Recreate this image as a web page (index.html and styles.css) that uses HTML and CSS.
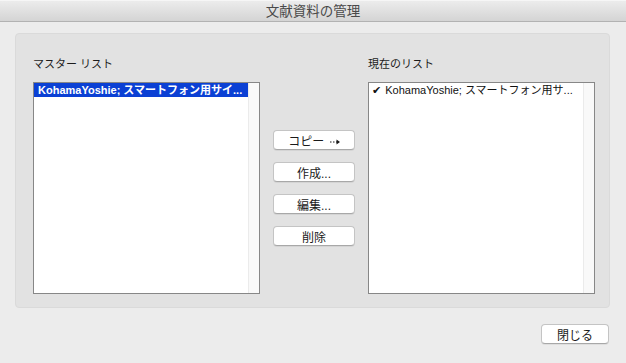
FILE: index.html
```html
<!DOCTYPE html>
<html lang="ja">

<head>
    <meta charset="UTF-8">
    <title>文献資料の管理</title>
    <link rel="stylesheet" href="styles.css">
</head>

<body>

    <div class="window">
        <!-- Title bar -->
        <div class="titlebar">文献資料の管理</div>

        <div class="content">
            <!-- Lists group -->
            <div class="group">
                <p class="label">マスター リスト</p>
                <div class="spacer"></div>
                <p class="label">現在のリスト</p>

                <div class="listbox">
                    <div class="rows">
                        <div class="row selected">KohamaYoshie; スマートフォン用サイ...</div>
                    </div>
                    <div class="scroll"></div>
                </div>

                <div class="actions">
                    <button class="btn">コピー
                        <svg class="arrow" width="10" height="6" viewBox="0 0 10 6">
                            <path d="M0 3h1.5M3 3h1.5M6 3h1" stroke="#1a1a1a" stroke-width="1.2" />
                            <path d="M6.5 0.5L10 3L6.5 5.5z" fill="#1a1a1a" />
                        </svg>
                    </button>
                    <button class="btn">作成...</button>
                    <button class="btn">編集...</button>
                    <button class="btn">削除</button>
                </div>

                <div class="listbox">
                    <div class="rows">
                        <div class="row"><span class="check">✔</span>KohamaYoshie; スマートフォン用サ...</div>
                    </div>
                    <div class="scroll"></div>
                </div>
            </div>

            <!-- Footer -->
            <div class="footer">
                <button class="btn btn-close">閉じる</button>
            </div>
        </div>
    </div>

</body>

</html>
```

FILE: styles.css
```css
/* Global styles */
* {
    margin: 0;
    padding: 0;
    box-sizing: border-box;
}

body {
    font-family: 'Liberation Sans', 'Noto Sans CJK JP', sans-serif;
    font-size: 11px;
    color: #1a1a1a;
    background: #ececec;
    width: 626px;
    height: 363px;
    overflow: hidden;
}

/* Title bar */
.titlebar {
    height: 22px;
    line-height: 21px;
    text-align: center;
    font-size: 13.5px;
    color: #4a4a4a;
    background: linear-gradient(to bottom, #ececec, #d4d4d4);
    border-top: 1px solid #f6f6f6;
    border-bottom: 1px solid #b2b2b2;
}

.content {
    padding: 11px 16px 0 15px;
}

/* Group box */
.group {
    display: grid;
    grid-template-columns: 227px 82px 227px;
    grid-template-rows: 25px 212px;
    column-gap: 13px;
    align-items: start;
    width: 595px;
    height: 275px;
    padding: 23px 0 0 17px;
    background: #e2e2e2;
    border: 1px solid #dadada;
    border-radius: 4px;
}

.label {
    height: 15px;
    line-height: 15px;
    color: #1c1c1c;
}

/* List boxes */
.listbox {
    display: flex;
    height: 212px;
    background: #fff;
    border: 1px solid #878787;
}

.rows {
    flex: 1;
    overflow: hidden;
}

.scroll {
    width: 11px;
    background: #f9f9f9;
    border-left: 1px solid #ebebeb;
}

.row {
    height: 14px;
    line-height: 14px;
    padding-left: 4px;
    white-space: nowrap;
    overflow: hidden;
    color: #111;
}

.row.selected {
    background: #0b40d4;
    color: #fff;
    font-weight: bold;
}

.check {
    font-family: 'DejaVu Sans', sans-serif;
    font-size: 11px;
    margin: 0 4px 0 -1px;
}

/* Buttons */
.actions {
    display: flex;
    flex-direction: column;
    gap: 12px;
    padding-top: 48px;
}

.btn {
    height: 20px;
    font-family: 'Liberation Sans', 'Noto Sans CJK JP', sans-serif;
    font-size: 12px;
    color: #1a1a1a;
    background: #fff;
    border: 1px solid #c4c4c4;
    border-bottom-color: #a8a8a8;
    border-radius: 4px;
    box-shadow: 0 1px 0 rgba(0, 0, 0, 0.06);
}

.arrow {
    margin-left: 2px;
    vertical-align: 1px;
}

/* Footer */
.footer {
    display: flex;
    justify-content: flex-end;
    padding: 16px 1px 0 0;
}

.btn-close {
    width: 68px;
}
```
